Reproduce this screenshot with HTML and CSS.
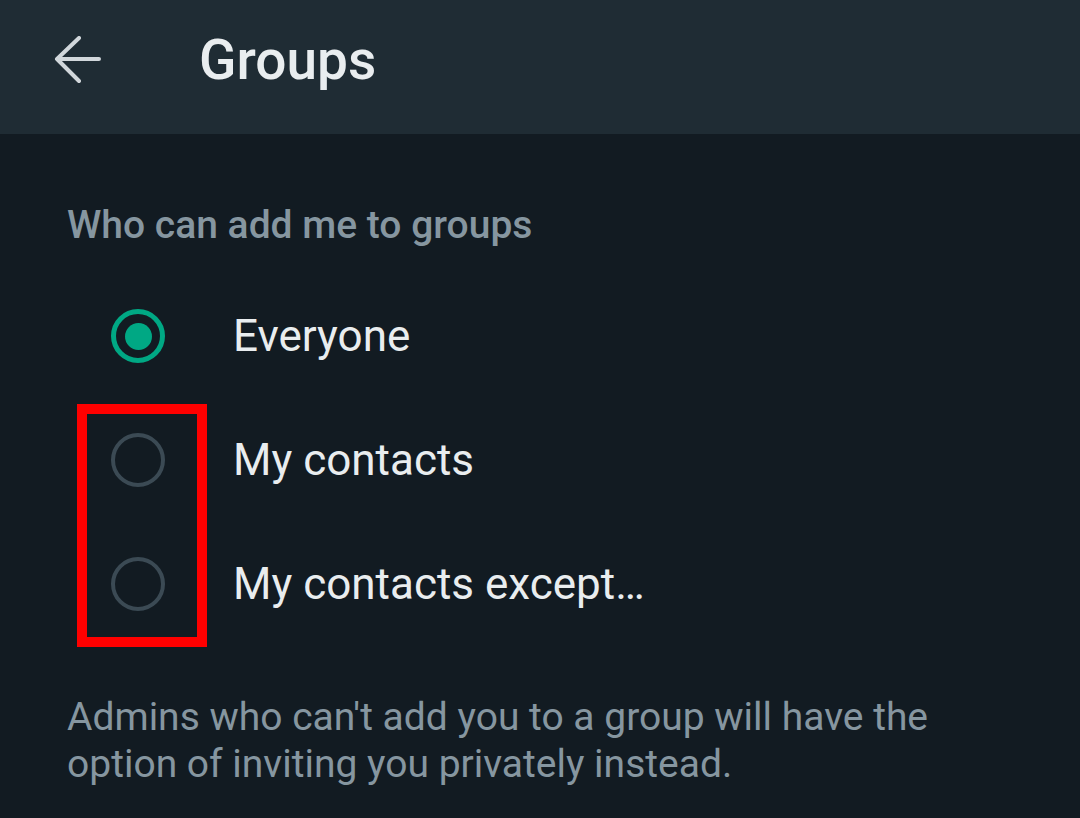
FILE: index.html
```html
<!DOCTYPE html>
<html>
<head>
<meta charset="utf-8">
<link rel="stylesheet" href="styles.css">
</head>
<body>
<div class="screen">
  <header class="topbar">
    <svg class="back" width="48" height="48" viewBox="0 0 48 48">
      <path d="M4 23 H46 M26 2 L4 23 L26 45" fill="none" stroke="#d1d7db" stroke-width="4" stroke-linecap="round" stroke-linejoin="round"/>
    </svg>
    <h1 class="title">Groups</h1>
  </header>
  <main class="content">
    <div class="section-label">Who can add me to groups</div>
    <div class="options">
      <div class="option">
        <span class="radio radio-on"><span class="dot"></span></span>
        <span class="option-text">Everyone</span>
      </div>
      <div class="option">
        <span class="radio"></span>
        <span class="option-text">My contacts</span>
      </div>
      <div class="option">
        <span class="radio"></span>
        <span class="option-text">My contacts except…</span>
      </div>
    </div>
    <p class="note">Admins who can't add you to a group will have the option of inviting you privately instead.</p>
  </main>
  <div class="highlight"></div>
</div>
</body>
</html>
```

FILE: styles.css
```css
html, body {
  margin: 0;
  padding: 0;
  background: #121b22;
}
.screen {
  position: relative;
  width: 1080px;
  height: 818px;
  overflow: hidden;
  background: #121b22;
  font-family: Roboto, "Noto Sans", sans-serif;
}
.topbar {
  height: 134px;
  background: #1f2c34;
  display: flex;
  align-items: center;
  box-sizing: border-box;
  padding-left: 53px;
  padding-bottom: 14px;
}
.back {
  display: block;
  flex: none;
}
.title {
  margin: 0 0 0 98px;
  font-size: 55px;
  font-weight: 500;
  color: #e9edef;
  letter-spacing: 0;
}
.content {
  padding: 0 0 0 67px;
}
.section-label {
  margin-top: 69px;
  font-size: 39px;
  font-weight: 500;
  color: #8696a0;
  line-height: 44px;
}
.options {
  margin-top: 27px;
  display: flex;
  flex-direction: column;
}
.option {
  height: 124px;
  display: flex;
  align-items: center;
}
.radio {
  box-sizing: border-box;
  width: 54px;
  height: 54px;
  margin-left: 44px;
  border-radius: 50%;
  border: 4px solid #3b4a54;
  display: flex;
  align-items: center;
  justify-content: center;
  flex: none;
}
.radio-on {
  border: 5px solid #00a884;
}
.dot {
  width: 27px;
  height: 27px;
  border-radius: 50%;
  background: #00a884;
}
.option-text {
  margin-left: 68px;
  font-size: 44px;
  color: #e9edef;
}
.note {
  margin: 48px 0 0 0;
  font-size: 39px;
  line-height: 47px;
  color: #8696a0;
  width: 880px;
}
.highlight {
  position: absolute;
  left: 77px;
  top: 404px;
  width: 130px;
  height: 243px;
  box-sizing: border-box;
  border: 10px solid #ff0000;
}
```
